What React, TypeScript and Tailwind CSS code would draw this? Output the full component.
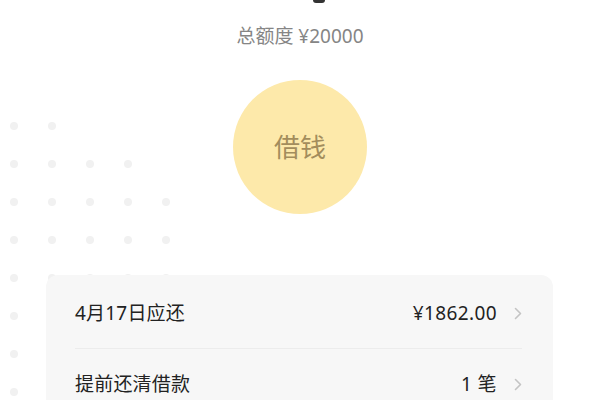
import React from "react";

const DOT_ROWS = [2, 4, 5, 5, 5, 1, 1, 1];

function DotField() {
  return (
    <div className="pointer-events-none absolute left-[10px] top-[122px] flex flex-col gap-[30px]">
      {DOT_ROWS.map((count, r) => (
        <div key={r} className="flex gap-[30px]">
          {Array.from({ length: count }).map((_, i) => (
            <span key={i} className="h-2 w-2 rounded-full bg-[#f1f1f1]" />
          ))}
        </div>
      ))}
    </div>
  );
}

function Chevron() {
  return (
    <svg width="8" height="13" viewBox="0 0 8 13" fill="none" className="ml-[17px]">
      <path d="M1.5 1.5l5 5-5 5" stroke="#c4c4c4" strokeWidth="1.6" strokeLinecap="round" strokeLinejoin="round" />
    </svg>
  );
}

function Row({ label, value, divider }: { label: string; value: string; divider?: boolean }) {
  return (
    <div className={divider ? "border-b border-[#ececec]" : ""}>
      <div className="flex h-[70px] items-center justify-between">
        <span className="text-[19px] tracking-[0.2px] text-[#222]">{label}</span>
        <div className="flex items-center">
          <span className="text-[19px] tracking-[0.4px] text-[#222]">{value}</span>
          <Chevron />
        </div>
      </div>
    </div>
  );
}

export default function App() {
  return (
    <div
      className="relative h-[400px] w-[600px] overflow-hidden bg-white"
      style={{ fontFamily: '"Noto Sans", "Noto Sans CJK SC", sans-serif' }}
    >
      <DotField />
      <div className="relative flex flex-col items-center">
        <div className="ml-[38px] h-[3px] w-[12px] rounded-b-full bg-[#333]" />
        <p className="mt-[21px] text-[19px] leading-[24px] text-[#858585]">总额度 ¥20000</p>
        <button className="mt-[32px] flex h-[134px] w-[134px] items-center justify-center rounded-full bg-[#fde9aa] text-[26px] text-[#a38d5c]">
          借钱
        </button>
      </div>
      <div className="relative ml-[46px] mt-[61px] w-[507px] rounded-[12px] bg-[#f7f7f7] pl-[29px] pr-[31px] pt-[3px]">
        <Row label="4月17日应还" value="¥1862.00" divider />
        <Row label="提前还清借款" value="1 笔" />
      </div>
    </div>
  );
}
